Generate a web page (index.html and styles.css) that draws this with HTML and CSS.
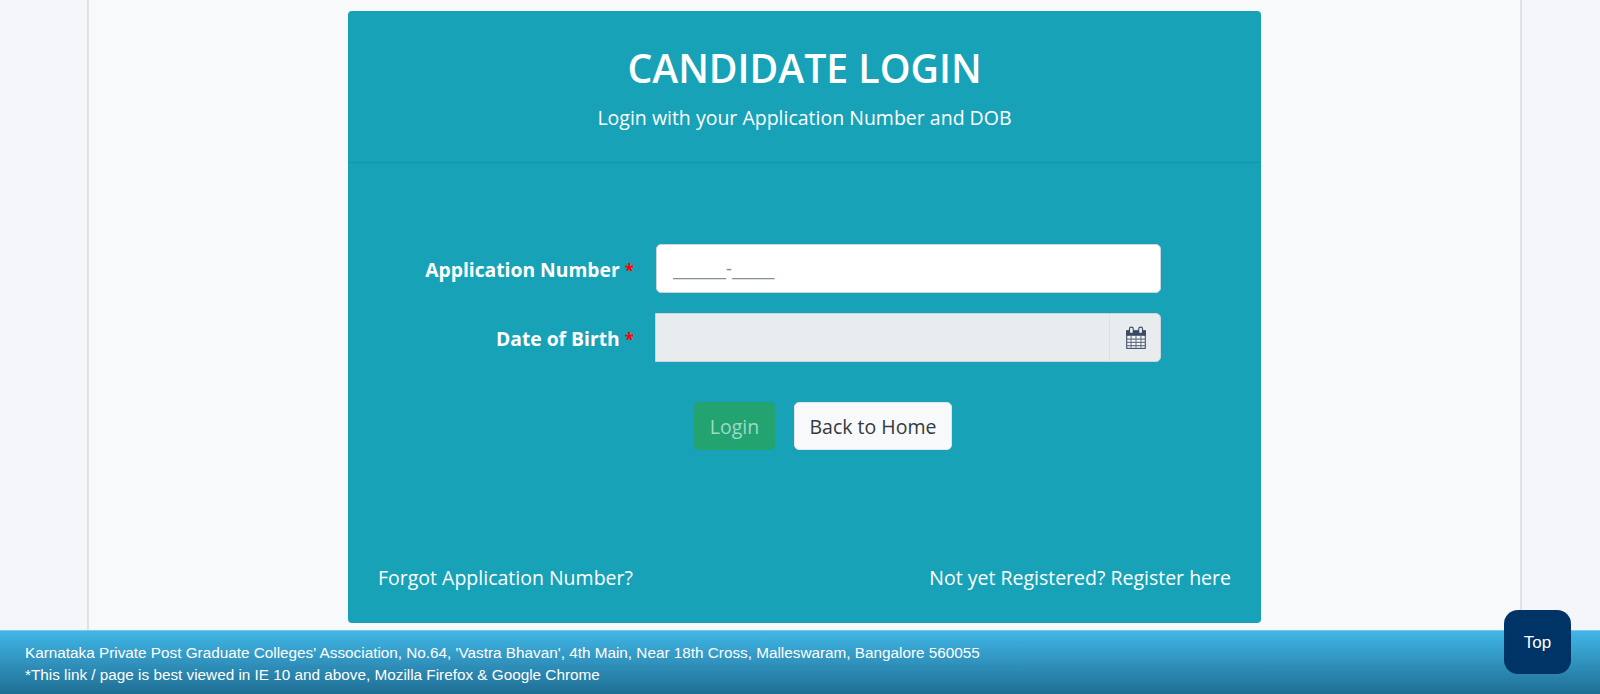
FILE: index.html
```html
<!DOCTYPE html>
<html lang="en">
<head>
<meta charset="utf-8">
<title>Candidate Login</title>
<link rel="stylesheet" href="styles.css">
</head>
<body>
<main class="page">
  <div class="container">
    <section class="card">
      <header class="card-head">
        <h1>CANDIDATE LOGIN</h1>
        <p>Login with your Application Number and DOB</p>
      </header>
      <form class="card-body">
        <div class="row">
          <label class="label">Application Number <span class="req">*</span></label>
          <div class="field"><input class="input" type="text" placeholder="_____-____"></div>
        </div>
        <div class="row row-date">
          <label class="label">Date of Birth <span class="req">*</span></label>
          <div class="field date">
            <span class="date-value"></span>
            <span class="addon">
              <svg class="cal" width="22" height="24" viewBox="0 0 20 22" aria-hidden="true">
                <rect x="1.5" y="4.5" width="17" height="16" fill="#f4f6f8" stroke="#3b4a63"/>
                <rect x="1" y="4" width="18" height="5" fill="#3b4a63"/>
                <path d="M1.5 12h17M1.5 15h17M1.500 18h17M5.500 9v11M10 9v11M14.500 9v11" stroke="#6a7488" stroke-width="1" fill="none"/>
                <rect x="4" y="1" width="3.500" height="6" rx="1.700" fill="#e9ecef" stroke="#3b4a63"/>
                <rect x="12.500" y="1" width="3.500" height="6" rx="1.700" fill="#e9ecef" stroke="#3b4a63"/>
              </svg>
            </span>
          </div>
        </div>
        <div class="actions">
          <button type="button" class="btn btn-login">Login</button>
          <button type="button" class="btn btn-home">Back to Home</button>
        </div>
        <div class="links">
          <a href="#">Forgot Application Number?</a>
          <a href="#">Not yet Registered? Register here</a>
        </div>
      </form>
    </section>
  </div>
</main>
<footer class="footer">
  <p>Karnataka Private Post Graduate Colleges' Association, No.64, 'Vastra Bhavan', 4th Main, Near 18th Cross, Malleswaram, Bangalore 560055</p>
  <p>*This link / page is best viewed in IE 10 and above, Mozilla Firefox &amp; Google Chrome</p>
</footer>
<a class="top" href="#">Top</a>
</body>
</html>
```
FILE: styles.css
```css
* { box-sizing: border-box; }
html, body { margin: 0; height: 100%; }
body {
  height: 694px;
  overflow: hidden;
  display: flex;
  flex-direction: column;
  background: #f4f6fa;
  font-family: "Open Sans", "Noto Sans", sans-serif;
  position: relative;
}
.page { flex: 1; min-height: 0; padding-left: 87px; }
.container {
  width: 1435px;
  height: 100%;
  background: #f8f9fb;
  border-left: 2px solid #dfe1e5;
  border-right: 2px solid #dfe1e5;
  padding: 11px 0 0 259px;
}
.card {
  width: 913px;
  height: 612px;
  background: #17a2b8;
  border-radius: 4px;
  color: #fff;
  display: flex;
  flex-direction: column;
}
.card-head {
  height: 152px;
  border-bottom: 1px solid #1596aa;
  text-align: center;
  padding-top: 32px;
}
.card-head h1 {
  margin: 0;
  font-size: 39.2px;
  line-height: 50px;
  font-weight: 600;
}
.card-head p {
  margin: 11px 0 0;
  font-size: 19.5px;
  line-height: 28px;
}
.card-body {
  flex: 1;
  display: flex;
  flex-direction: column;
  padding: 81px 30px 0;
}
.row { display: flex; align-items: center; height: 49px; }
.row-date { margin-top: 20px; }
.label {
  width: 266px;
  padding: 1px 10px 0 0;
  text-align: right;
  font-size: 19.3px;
  font-weight: 700;
}
.req { color: #f00; font-size: 17px; }
.field { width: 505px; height: 49px; margin-left: 12px; }
.input {
  width: 100%;
  height: 100%;
  border: 1px solid #ced4da;
  border-radius: 5px;
  padding: 0 16px;
  font: 19px "Liberation Sans", Arial, sans-serif;
  background: #fff;
}
.input::placeholder { color: #87919a; opacity: 1; }
.date {
  display: flex;
  width: 506px;
  margin-left: 11px;
  background: #e9ecef;
  border: 1px solid #ced4da;
  border-radius: 0 5px 5px 0;
}
.date-value { flex: 1; }
.addon {
  width: 51px;
  border-left: 1px solid #dde1e5;
  display: flex;
  align-items: center;
  justify-content: center;
}
.cal { margin-left: 1px; }
.actions {
  display: flex;
  justify-content: center;
  gap: 19px;
  margin-top: 40px;
  padding-left: 37px;
}
.btn {
  height: 48px;
  border-radius: 5px;
  font: 19.5px/1.500 "Open Sans", sans-serif;
  padding: 2px 0 0;
  border: 1px solid transparent;
  white-space: nowrap;
}
.btn-login { width: 81px; background: #22a36f; color: #9adccb; }
.btn-home { width: 158px; background: #f8f9fa; color: #343a40; border-color: #e0e3e7; }
.links {
  display: flex;
  justify-content: space-between;
  margin-top: auto;
  margin-bottom: 31px;
  font-size: 19.5px;
  line-height: 28px;
}
.links a { color: #fff; text-decoration: none; }
.footer {
  height: 64px;
  flex: none;
  background: linear-gradient(#41b6e6, #1f6e94);
  border-top: 1px solid #7cc8ea;
  color: #fff;
  font: 15.300px/22px "Liberation Sans", Arial, sans-serif;
  padding: 11px 0 0 25px;
}
.footer p { margin: 0; }
.top {
  position: absolute;
  left: 1504px;
  top: 610px;
  width: 67px;
  height: 64px;
  border-radius: 14px;
  background: #003366;
  color: #fff;
  display: flex;
  align-items: center;
  justify-content: center;
  padding-top: 2px;
  text-decoration: none;
  font: 17px "Liberation Sans", Arial, sans-serif;
}
```
